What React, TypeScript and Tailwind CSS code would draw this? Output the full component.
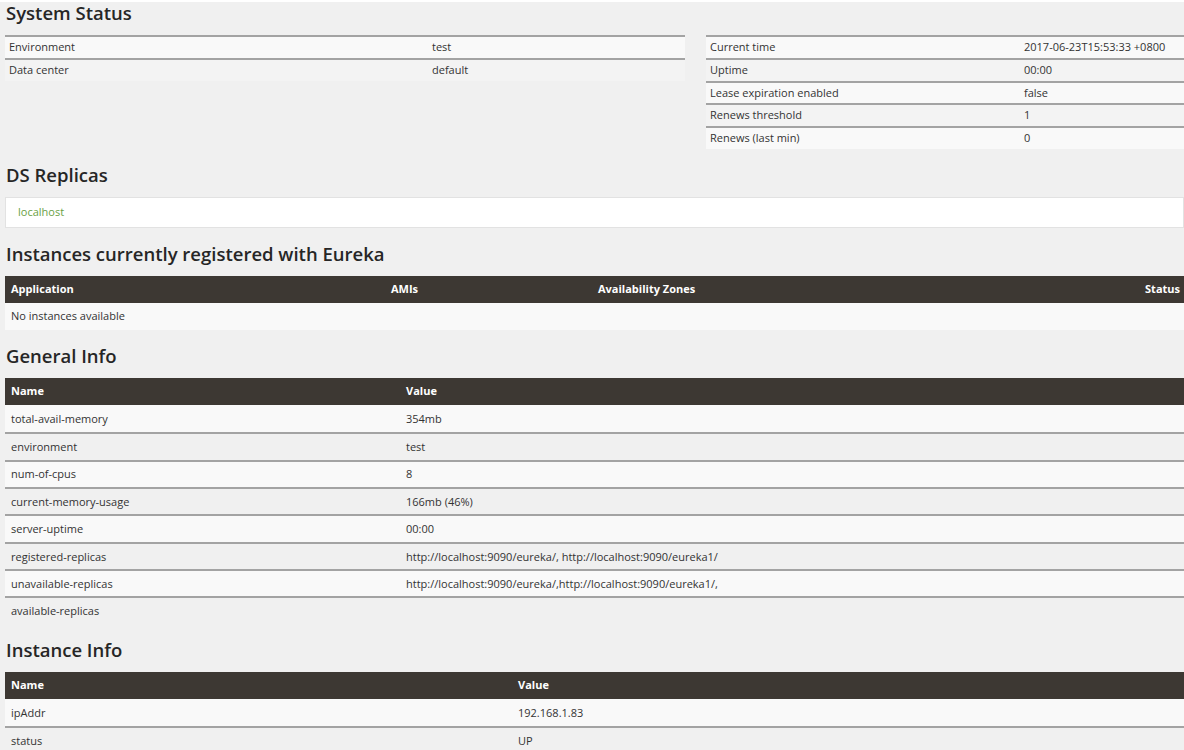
import React from "react";

const body = { fontFamily: '"Open Sans", "Liberation Sans", sans-serif' };
const head = { fontFamily: '"Open Sans", "DejaVu Sans", sans-serif' };

const leftStatus = [
  ["Environment", "test"],
  ["Data center", "default"],
];

const rightStatus = [
  ["Current time", "2017-06-23T15:53:33 +0800"],
  ["Uptime", "00:00"],
  ["Lease expiration enabled", "false"],
  ["Renews threshold", "1"],
  ["Renews (last min)", "0"],
];

const generalInfo = [
  ["total-avail-memory", "354mb"],
  ["environment", "test"],
  ["num-of-cpus", "8"],
  ["current-memory-usage", "166mb (46%)"],
  ["server-uptime", "00:00"],
  ["registered-replicas", "http://localhost:9090/eureka/, http://localhost:9090/eureka1/"],
  ["unavailable-replicas", "http://localhost:9090/eureka/,http://localhost:9090/eureka1/,"],
  ["available-replicas", ""],
];

const instanceInfo = [
  ["ipAddr", "192.168.1.83"],
  ["status", "UP"],
];

function Heading({ children, first }: { children: React.ReactNode; first?: boolean }) {
  return (
    <h2
      style={head}
      className={`${first ? "mt-[2px]" : "mt-[15px]"} mb-[11px] h-[22px] pl-px text-[18.5px] leading-[22px] font-semibold text-[#262626]`}
    >
      {children}
    </h2>
  );
}

function StatusTable({ rows, labelWidth }: { rows: string[][]; labelWidth: string }) {
  return (
    <div className="flex flex-col">
      {rows.map(([k, v], i) => (
        <div
          key={k}
          className={`flex h-[22.75px] items-center border-t-2 border-[#a3a3a3] text-[11px] text-[#333] ${
            i % 2 === 0 ? "bg-[#f9f9f9]" : "bg-[#f3f3f3]"
          }`}
        >
          <div className={`${labelWidth} shrink-0 pl-1`}>{k}</div>
          <div className="flex-1">{v}</div>
        </div>
      ))}
    </div>
  );
}

function InfoTable({ rows, nameWidth }: { rows: string[][]; nameWidth: string }) {
  return (
    <div className="flex flex-col">
      <div className="flex h-[27px] items-center bg-[#3d3833] text-[11px] font-bold text-white">
        <div className={`${nameWidth} shrink-0 pl-1.5`}>Name</div>
        <div className="flex-1">Value</div>
      </div>
      {rows.map(([k, v], i) => (
        <div
          key={k}
          className={`flex h-[27.4px] items-center pt-px text-[11px] text-[#333] ${
            i > 0 ? "border-t-2 border-[#a3a3a3]" : ""
          } ${i % 2 === 0 ? "bg-[#f9f9f9]" : "bg-[#f0f0f0]"}`}
        >
          <div className={`${nameWidth} shrink-0 pl-1.5`}>{k}</div>
          <div className="flex-1">{v}</div>
        </div>
      ))}
    </div>
  );
}

export default function App() {
  return (
    <div style={body} className="min-h-screen bg-[#f0f0f0] pl-[5px]">
      {/* System Status */}
      <Heading first>System Status</Heading>
      <div className="flex gap-[21px]">
        <div className="w-[680px]">
          <StatusTable rows={leftStatus} labelWidth="w-[427px]" />
        </div>
        <div className="flex-1">
          <StatusTable rows={rightStatus} labelWidth="w-[318px]" />
        </div>
      </div>

      {/* DS Replicas */}
      <Heading>DS Replicas</Heading>
      <div className="flex h-[31px] items-center border border-[#e2e2e2] bg-white pl-3 text-[11px] text-[#6a9f45]">
        localhost
      </div>

      {/* Instances */}
      <Heading>Instances currently registered with Eureka</Heading>
      <div className="flex flex-col">
        <div className="flex h-[27px] items-center bg-[#3d3833] text-[11px] font-bold text-white">
          <div className="w-[386px] shrink-0 pl-1.5">Application</div>
          <div className="w-[207px] shrink-0">AMIs</div>
          <div className="flex-1">Availability Zones</div>
          <div className="pr-1">Status</div>
        </div>
        <div className="flex h-[27px] items-center bg-[#f9f9f9] pl-1.5 text-[11px] text-[#333]">
          No instances available
        </div>
      </div>

      {/* General Info */}
      <Heading>General Info</Heading>
      <InfoTable rows={generalInfo} nameWidth="w-[401px]" />

      {/* Instance Info */}
      <Heading>Instance Info</Heading>
      <InfoTable rows={instanceInfo} nameWidth="w-[513px]" />
    </div>
  );
}
